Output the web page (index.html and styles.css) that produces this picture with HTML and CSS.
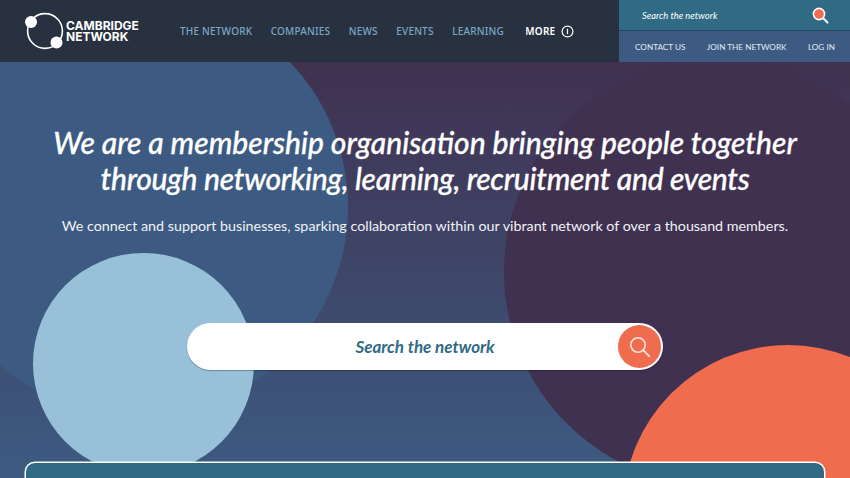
FILE: index.html
```html
<!DOCTYPE html>
<html lang="en">
<head>
  <meta charset="UTF-8" />
  <title>Cambridge Network</title>
  <link rel="stylesheet" href="styles.css">
</head>
<body>

  <header class="topbar">
    <a class="logo" href="#">
      <svg class="logo-mark" width="40" height="40" viewBox="0 0 40 40">
        <circle cx="20" cy="20" r="17.4" fill="none" stroke="#fff" stroke-width="1.6" />
        <circle cx="6" cy="11" r="6" fill="#fff" />
        <circle cx="31.5" cy="31.5" r="6" fill="#fff" />
      </svg>
      <span class="logo-text">CAMBRIDGE<br>NETWORK</span>
    </a>
    <nav class="mainnav">
      <a href="#">THE NETWORK</a>
      <a href="#">COMPANIES</a>
      <a href="#">NEWS</a>
      <a href="#">EVENTS</a>
      <a href="#">LEARNING</a>
      <a class="more" href="#">MORE
        <svg width="13" height="13" viewBox="0 0 13 13">
          <circle cx="6.5" cy="6.5" r="5.4" fill="none" stroke="#fff" stroke-width="1.2" />
          <path d="M6.5 3.8v5.4" stroke="#fff" stroke-width="1.2" />
        </svg>
      </a>
    </nav>
    <div class="toppanel">
      <div class="topsearch">
        <span>Search the network</span>
        <svg width="17" height="17" viewBox="0 0 17 17">
          <path d="M10.5 10.5l5 5" stroke="#fff" stroke-width="2" stroke-linecap="round" />
          <circle cx="7" cy="7" r="5.6" fill="#f06c4e" stroke="#fff" stroke-width="1.6" />
        </svg>
      </div>
      <div class="toplinks">
        <a href="#">CONTACT US</a>
        <a href="#">JOIN THE NETWORK</a>
        <a href="#">LOG IN</a>
      </div>
    </div>
  </header>

  <section class="hero">
    <div class="shape shape-purple"></div>
    <div class="shape shape-blue"></div>
    <div class="shape shape-light"></div>
    <div class="shape shape-orange"></div>

    <div class="hero-content">
      <h1>We are a membership organisation bringing people together<br><span class="tight">through networking, learning, recruitment and events</span></h1>
      <p>We connect and support businesses, sparking collaboration within our vibrant network of over a thousand members.</p>
      <div class="bigsearch">
        <span>Search the network</span>
        <button aria-label="Search">
          <svg width="26" height="26" viewBox="0 0 26 26">
            <circle cx="11" cy="11" r="7.2" fill="none" stroke="#fde6df" stroke-width="1.6" />
            <path d="M16.2 16.2l6.6 6.6" stroke="#fde6df" stroke-width="1.8" />
          </svg>
        </button>
      </div>
      <div class="card"></div>
    </div>
  </section>

</body>
</html>
```

FILE: styles.css
```css
html, body {
  height: 478px;
  overflow: hidden;
}
body {
  margin: 0;
  font-family: Lato, sans-serif;
  background: #3d5b82;
}
a {
  text-decoration: none;
  color: inherit;
}

/* top bar */
.topbar {
  display: flex;
  height: 62px;
  background: #28313f;
}
.logo {
  display: flex;
  align-items: center;
  gap: 1px;
  margin-left: 25px;
  width: 155px;
}
.logo-mark {
  flex: none;
}
.logo-text {
  font-family: Inter, sans-serif;
  font-size: 12px;
  font-weight: 700;
  line-height: 11px;
  color: #fff;
}
.mainnav {
  display: flex;
  align-items: center;
  gap: 18.5px;
  flex: 1;
  font-family: "Noto Sans", sans-serif;
  font-size: 10px;
  font-weight: 500;
  letter-spacing: 0.2px;
  color: #7ba6c8;
}
.mainnav .more {
  display: flex;
  align-items: center;
  gap: 6px;
  margin-left: 3px;
  font-weight: 600;
  color: #fff;
}
.toppanel {
  width: 231px;
  color: #fff;
}
.topsearch {
  display: flex;
  align-items: center;
  justify-content: space-between;
  height: 31px;
  padding: 0 21px 0 23px;
  background: #316a84;
  border-bottom: 1px solid #28465f;
  box-sizing: border-box;
  font-size: 9.4px;
  font-style: italic;
}
.toplinks {
  display: flex;
  align-items: center;
  justify-content: space-between;
  height: 31px;
  padding: 0 15px 0 16px;
  background: #3d5b82;
  font-size: 8.2px;
  color: #e4ebf2;
}

/* hero */
.hero {
  position: relative;
  height: 416px;
  overflow: hidden;
  background: linear-gradient(to bottom, #403150, #3d5b82);
}
.shape {
  position: absolute;
  border-radius: 50%;
}
.shape-blue {
  left: -72px;
  top: -65px;
  width: 420px;
  height: 420px;
  background: #3d5b82;
}
.shape-purple {
  left: 504px;
  top: -4px;
  width: 428px;
  height: 428px;
  background: #403150;
}
.shape-light {
  left: 33px;
  top: 191px;
  width: 221px;
  height: 221px;
  background: #99c0d9;
}
.shape-orange {
  left: 623px;
  top: 283px;
  width: 330px;
  height: 330px;
  background: #f06c4e;
}
.hero-content {
  position: relative;
  display: flex;
  flex-direction: column;
  align-items: center;
  padding-top: 62px;
  color: #fff;
}
h1 {
  margin: 0;
  font-size: 30px;
  font-weight: 500;
  font-style: italic;
  line-height: 36px;
  text-align: center;
  -webkit-text-stroke: 0.3px #fff;
}
h1 .tight {
  letter-spacing: -0.27px;
}
p {
  margin: 20px 0 0;
  font-size: 14.3px;
  line-height: 20px;
  color: #f0f2f6;
}
.bigsearch {
  display: flex;
  align-items: center;
  justify-content: center;
  position: relative;
  width: 476px;
  height: 47px;
  margin-top: 87px;
  border-radius: 24px;
  background: #fff;
  box-shadow: 0 1px 1px rgba(0, 0, 0, 0.3);
  font-size: 17px;
  font-weight: 700;
  font-style: italic;
  color: #316a84;
}
.bigsearch button {
  position: absolute;
  right: 2px;
  top: 2px;
  width: 43px;
  height: 43px;
  padding: 0;
  display: flex;
  align-items: center;
  justify-content: center;
  border: none;
  border-radius: 50%;
  background: #f06c4e;
}
.card {
  width: 798px;
  height: 60px;
  margin-top: 92px;
  border: 1px solid #fff;
  border-radius: 10px;
  background: #316a84;
  box-shadow: 0 0 0 0.5px #fff;
}
```
